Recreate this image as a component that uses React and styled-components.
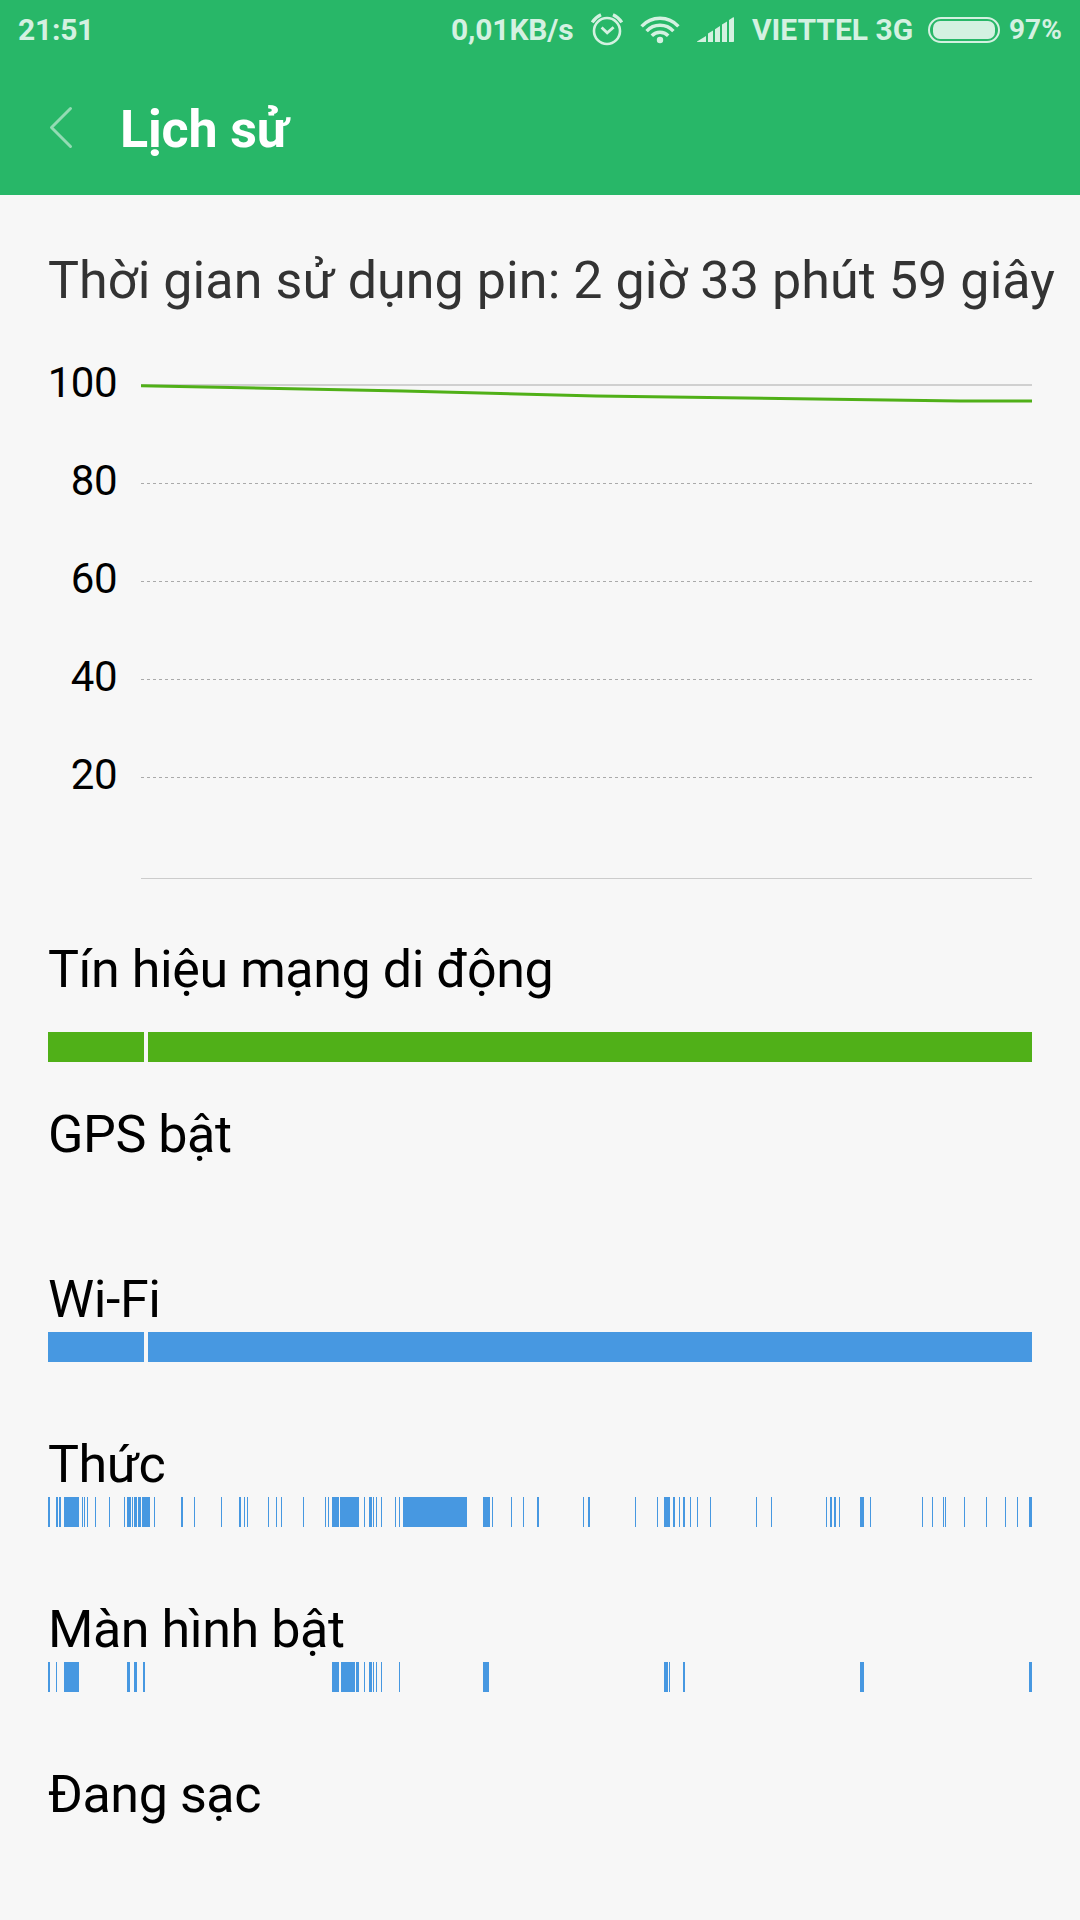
import React from 'react'
import styled, { createGlobalStyle } from 'styled-components'

const GlobalStyle = createGlobalStyle`
  * {
    box-sizing: border-box;
  }

  body {
    margin: 0;
    background-color: #f7f7f7;
    font-family: Roboto, 'Noto Sans', sans-serif;
  }

  svg {
    display: block;
    flex-shrink: 0;
  }
`

const Screen = styled.div`
  width: 1080px;
  height: 1920px;
  overflow: hidden;
  background-color: #f7f7f7;
`

const TopArea = styled.header`
  height: 195px;
  background-color: #28b768;
`

const StatusBar = styled.div`
  display: flex;
  align-items: center;
  height: 60px;
  padding: 0 18px;
  color: #d4f1e1;
  font-weight: 700;
  line-height: 60px;
  white-space: nowrap;
`

const StatusText = styled.span`
  flex-shrink: 0;
  width: ${props => props.width}px;
  margin-left: ${props => props.gap || 0}px;
  font-size: ${props => props.size || 30}px;
  letter-spacing: ${props => props.spacing || 0}px;
`

const StatusIcon = styled.svg`
  margin-left: ${props => props.$gap}px;
`

const Battery = styled.div`
  flex-shrink: 0;
  width: 72px;
  height: 26px;
  margin-left: 14px;
  padding: 2px 3px;
  border: 2px solid #d4f1e1;
  border-radius: 13px;
`

const BatteryLevel = styled.div`
  width: 62px;
  height: 18px;
  border-radius: 7px;
  background-color: #d4f1e1;
`

const TitleBar = styled.div`
  display: flex;
  align-items: center;
  height: 135px;
  padding-left: 48px;
`

const Title = styled.h1`
  margin: 5px 0 0 45px;
  color: #ffffff;
  font-size: 52px;
  font-weight: 700;
  letter-spacing: -0.15px;
  line-height: 62px;
`

const Content = styled.main`
  padding: 55px 0 0 48px;
`

const Usage = styled.div`
  color: #333333;
  font-size: 52px;
  letter-spacing: 0.08px;
  line-height: 62px;
  white-space: nowrap;
`

const Chart = styled.div`
  display: flex;
  height: 604px;
  margin-top: 22px;
`

const Scale = styled.div`
  display: flex;
  flex-direction: column;
  align-items: flex-end;
  width: 93px;
  padding-right: 24px;
`

const ScaleLabel = styled.span`
  height: 98px;
  font-size: 42px;
  letter-spacing: -0.5px;
  line-height: 98px;
`

const Row = styled.section`
  height: 165px;
  padding-top: 1px;
`

const RowLabel = styled.div`
  margin-bottom: ${props => props.space || 1}px;
  color: #000000;
  font-size: 52px;
  letter-spacing: -0.42px;
  line-height: 62px;
`

const GREEN = '#50b018'
const BLUE = '#4798e1'

// [start, width] on a 984 wide timeline
const connected = [[0, 96], [100, 884]]

const awake = [
  [0, 2], [8, 2], [11, 2], [16, 15], [34, 1], [36, 1], [39, 1], [47, 1], [61, 1],
  [76, 1], [79, 4], [84, 1], [86, 3], [90, 3], [94, 8], [106, 1], [133, 2], [146, 1],
  [173, 1], [191, 2], [196, 1], [199, 1], [220, 1], [228, 1], [233, 1], [255, 1],
  [277, 1], [280, 1], [284, 7], [292, 19], [316, 1], [321, 3], [325, 1], [328, 1],
  [333, 1], [347, 1], [351, 1], [355, 64], [435, 7], [444, 1], [463, 1], [475, 1],
  [489, 2], [535, 1], [540, 2], [587, 1], [609, 1], [616, 6], [625, 2], [631, 1],
  [635, 2], [642, 1], [649, 1], [662, 1], [708, 1], [723, 1], [778, 1], [782, 2],
  [786, 2], [791, 1], [812, 4], [822, 1], [874, 1], [884, 1], [895, 1], [897, 1],
  [916, 1], [938, 1], [957, 1], [969, 1], [981, 3],
]

const screenOn = [
  [0, 2], [8, 1], [16, 15], [79, 3], [86, 3], [95, 2], [284, 7], [293, 14], [308, 3],
  [316, 1], [321, 3], [325, 1], [328, 1], [333, 1], [351, 1], [435, 6], [616, 4],
  [621, 1], [635, 2], [812, 4], [981, 3],
]

const rows = [
  { label: 'Tín hiệu mạng di động', segments: connected, color: GREEN, space: 31 },
  { label: 'GPS bật', segments: [] },
  { label: 'Wi-Fi', segments: connected, color: BLUE },
  { label: 'Thức', segments: awake, color: BLUE },
  { label: 'Màn hình bật', segments: screenOn, color: BLUE },
  { label: 'Đang sạc', segments: [] },
]

const Timeline = ({ segments, color }) => (
  <svg width="984" height="30" fill={color} shapeRendering="crispEdges">
    {segments.map(([x, width]) => (
      <rect key={x} x={x} y="0" width={width} height="30" />
    ))}
  </svg>
)

const AlarmIcon = () => (
  <StatusIcon $gap={16} width="34" height="34" viewBox="0 0 34 34" fill="none" stroke="currentColor">
    <circle cx="17" cy="18" r="13" strokeWidth="2.6" />
    <path d="M11.6 14.4 L17.2 19.8 L23.6 14.2" strokeWidth="2.8" />
    <path d="M2.2 9.4 Q5.4 4.2 11 1.7 M31.8 9.4 Q28.6 4.2 23 1.7" strokeWidth="3.2" />
  </StatusIcon>
)

const WifiIcon = () => (
  <StatusIcon $gap={16} width="40" height="28" viewBox="0 0 40 28" fill="none" stroke="currentColor" strokeWidth="3.4">
    <path d="M1.6 10.4 A25 25 0 0 1 38.4 10.4" />
    <path d="M6.6 15.1 A18.2 18.2 0 0 1 33.4 15.1" />
    <path d="M11.8 19.8 A11.4 11.4 0 0 1 28.2 19.8" />
    <circle cx="20" cy="24" r="3.2" fill="currentColor" stroke="none" />
  </StatusIcon>
)

const SignalIcon = () => (
  <StatusIcon $gap={17} width="38" height="26" viewBox="0 0 38 26" fill="currentColor">
    <path d="M0 24.5 L9 19 V25 H0.6 Q0 25 0 24.5 Z" />
    <path d="M11 16.6 L16 13.6 V25 H11 Z" />
    <path d="M18 12.2 L23 9 V25 H18 Z" />
    <path d="M25 7.6 L30 4.4 V25 H25 Z" />
    <path d="M32 3 L36.2 0.2 Q37 0 37 0.8 V24.3 Q37 25 36.3 25 H32 Z" />
  </StatusIcon>
)

const BatteryChart = () => (
  <Chart>
    <Scale>
      {[100, 80, 60, 40, 20].map(value => (
        <ScaleLabel key={value}>{value}</ScaleLabel>
      ))}
    </Scale>
    <svg width="891" height="604" fill="none">
      <path d="M0 51 H891" stroke="#d0d0d0" strokeWidth="2" />
      {[149.5, 247.5, 345.5, 443.5].map(y => (
        <path key={y} d={`M0 ${y} H891`} stroke="#aaaaaa" strokeDasharray="3 3" />
      ))}
      <path d="M0 544.5 H891" stroke="#cccccc" />
      <polyline points="0,51.7 262,57 455,61.9 819,67 891,67" stroke={GREEN} strokeWidth="3" />
    </svg>
  </Chart>
)

const App = () => {
  return (
    <Screen>
      <GlobalStyle />
      <TopArea>
        <StatusBar>
          <StatusText width={433} spacing={-0.25}>21:51</StatusText>
          <StatusText width={123} spacing={-0.15}>0,01KB/s</StatusText>
          <AlarmIcon />
          <WifiIcon />
          <SignalIcon />
          <StatusText width={162} gap={17}>VIETTEL 3G</StatusText>
          <Battery>
            <BatteryLevel />
          </Battery>
          <StatusText width={54} gap={9} size={28}>97%</StatusText>
        </StatusBar>
        <TitleBar>
          <svg width="27" height="44" viewBox="0 0 27 44" fill="none" stroke="#93dbb4" strokeWidth="3" strokeLinecap="round" strokeLinejoin="round">
            <path d="M22.5 2.5 L3.5 21.5 L22.5 40.5" />
          </svg>
          <Title>Lịch sử</Title>
        </TitleBar>
      </TopArea>
      <Content>
        <Usage>Thời gian sử dụng pin: 2 giờ 33 phút 59 giây</Usage>
        <BatteryChart />
        {rows.map(({ label, segments, color, space }) => (
          <Row key={label}>
            <RowLabel space={space}>{label}</RowLabel>
            {segments.length > 0 && <Timeline segments={segments} color={color} />}
          </Row>
        ))}
      </Content>
    </Screen>
  )
}

export default App
